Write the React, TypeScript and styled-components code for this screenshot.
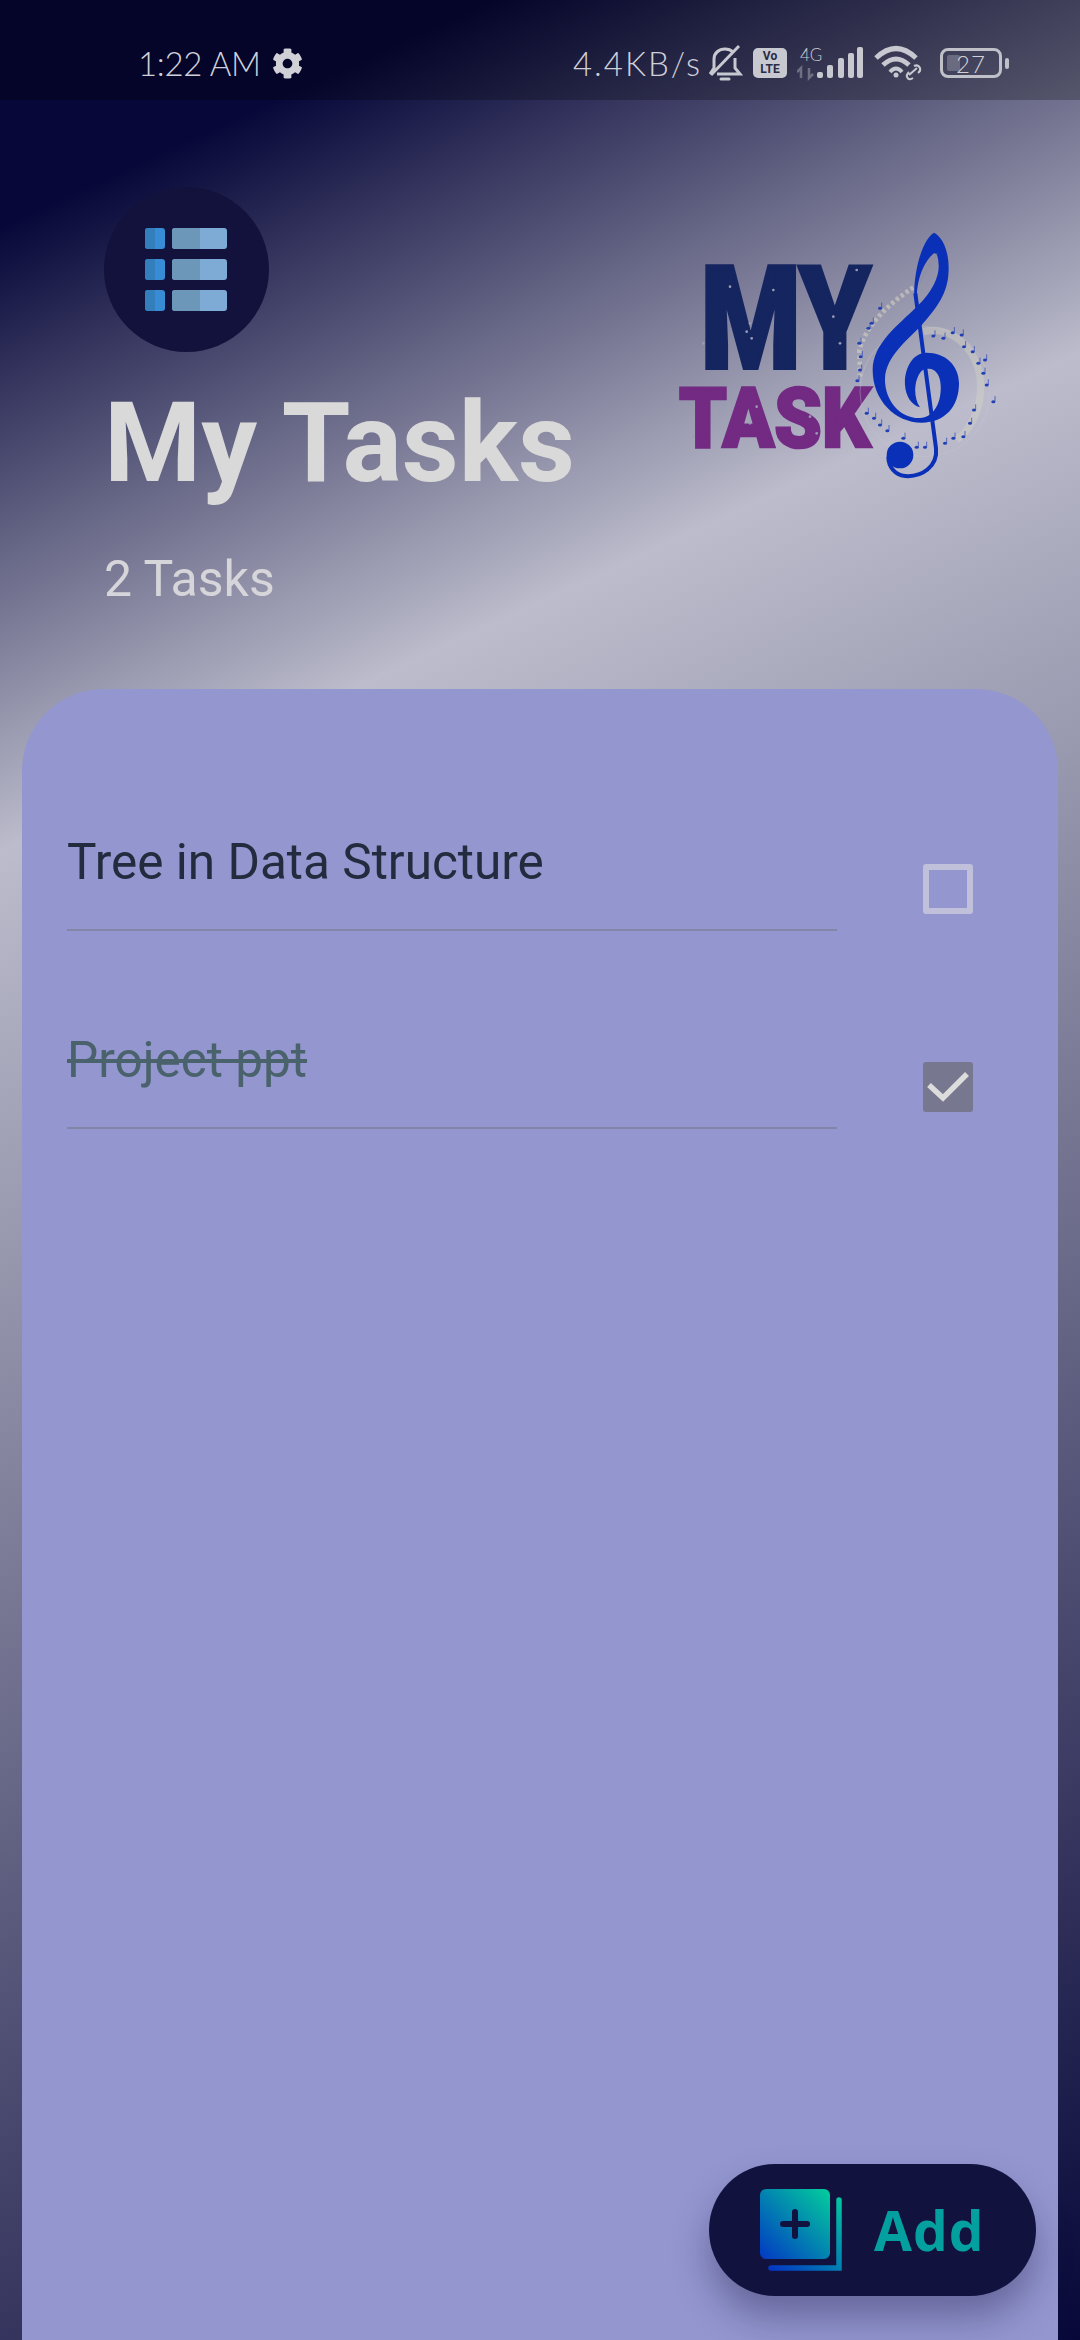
import React from 'react'
import styled, { createGlobalStyle } from 'styled-components'
import { FaCog } from 'react-icons/fa'

const GlobalStyle = createGlobalStyle`
  html, body {
    margin: 0;
    padding: 0;
    background: #070739;
  }
  * {
    box-sizing: border-box;
  }
`;

interface Task {
  title: string;
  done: boolean;
}

const tasks: Task[] = [
  { title: 'Tree in Data Structure', done: false },
  { title: 'Project ppt', done: true },
];

// little notes that circle the clef, in logo coordinates
const notes = [
  [628, 400], [632, 440], [630, 480], [622, 512], [650, 610], [672, 625], [690, 645], [712, 662],
  [850, 378], [880, 385], [908, 368], [935, 375], [942, 410], [968, 425], [985, 460], [1005, 450],
  [1000, 490], [1010, 525], [1030, 575], [972, 600], [960, 640], [940, 680], [910, 685], [885, 700],
  [800, 712], [825, 712], [760, 685], [665, 340], [690, 295], [655, 355],
];

const specks = [
  [300, 340], [290, 365], [305, 385], [240, 230], [370, 240], [550, 320], [570, 400], [160, 400],
  [210, 610], [320, 590], [300, 640], [480, 620], [500, 670], [130, 680], [620, 180],
];

const Logo = () => (
  <LogoSvg viewBox="0 0 1080 870">
    <text x="152" y="475" fontFamily="Roboto" fontWeight="900" fontSize="430" fill="#142560" stroke="#142560" strokeWidth="12" textLength="510" lengthAdjust="spacingAndGlyphs">MY</text>
    <text x="87" y="712" fontFamily="Roboto" fontWeight="900" fontSize="252" fill="#722a82" stroke="#722a82" strokeWidth="8" textLength="575" lengthAdjust="spacingAndGlyphs">TASK</text>
    {specks.map(([x, y]) => (
      <circle key={`${x}-${y}`} cx={x} cy={y} r="4" fill="#9a9ab4" />
    ))}
    <path d="M790 232 C720 280 650 340 628 420 L630 500" fill="none" stroke="#d8d5c2" strokeWidth="14" strokeDasharray="10 8" opacity="0.55" />
    <path d="M820 365 C900 345 975 410 990 500 C1000 570 975 650 920 690" fill="none" stroke="#d8d5c2" strokeWidth="22" opacity="0.4" />
    <circle cx="825" cy="545" r="195" fill="none" stroke="#c6c6d2" strokeWidth="2" opacity="0.6" />
    {notes.map(([x, y]) => (
      <g key={`${x}-${y}`} fill="#2240b4" stroke="#2240b4">
        <ellipse cx={x} cy={y} rx="6" ry="4.5" strokeWidth="0" />
        <line x1={x + 5} y1={y} x2={x + 5} y2={y - 17} strokeWidth="2" />
      </g>
    ))}
    <path d="M852 68 C885 85 900 140 895 195 C890 260 850 305 815 345 C770 392 708 440 705 505 C703 570 750 626 810 624 C850 622 875 580 872 525 C870 490 850 465 815 482 C790 510 790 565 810 592 C785 585 767 560 765 525 C762 480 785 428 830 428 C885 428 927 465 927 520 C927 590 885 638 815 638 C735 638 668 570 668 480 C668 400 745 345 800 290 C850 245 868 195 866 165 C865 140 860 128 852 130 C825 150 802 200 800 260 L793 260 C790 190 815 90 852 68 Z" fill="#0a30b8" />
    <path d="M796 250 L858 715 C864 770 815 802 765 798 C735 795 715 770 715 740" fill="none" stroke="#0a30b8" strokeWidth="12" />
    <circle cx="750" cy="735" r="40" fill="#0a30b8" />
    <path d="M862 130 C845 160 825 190 810 215" fill="none" stroke="#8a8a9c" strokeWidth="2" />
  </LogoSvg>
);

const ListIcon = () => (
  <svg width="83" height="84" viewBox="0 0 83 84">
    {[0, 31, 62].map((y) => (
      <g key={y}>
        <rect x="0" y={y} width="20" height="21" rx="3" fill="#388bd5" />
        <path d={`M3 ${y} H10 V${y + 21} H3 Q0 ${y + 21} 0 ${y + 18} V${y + 3} Q0 ${y} 3 ${y} Z`} fill="#337fbc" />
        <rect x="27" y={y} width="55" height="21" rx="3" fill="#7eabd6" />
        <path d={`M30 ${y} H55 V${y + 21} H30 Q27 ${y + 21} 27 ${y + 18} V${y + 3} Q27 ${y} 30 ${y} Z`} fill="#6c97b9" />
      </g>
    ))}
  </svg>
);

const AddIcon = () => (
  <svg width="82" height="82" viewBox="0 0 82 82">
    <defs>
      <linearGradient id="addFill" x1="0" y1="1" x2="1" y2="0">
        <stop offset="0" stopColor="#0238c4" />
        <stop offset="1" stopColor="#03cf9c" />
      </linearGradient>
      <linearGradient id="addEdge" x1="0" y1="1" x2="1" y2="0">
        <stop offset="0" stopColor="#0238c4" />
        <stop offset="1" stopColor="#03c4a0" />
      </linearGradient>
    </defs>
    <rect x="0" y="0" width="70" height="70" rx="6" fill="url(#addFill)" />
    <path d="M35 23 V47 M23 35 H47" stroke="#12123f" strokeWidth="6" strokeLinecap="round" />
    <path d="M79 11 V79 H11" fill="none" stroke="url(#addEdge)" strokeWidth="5.5" strokeLinecap="round" />
  </svg>
);

const BellOff = () => (
  <svg width="36" height="38" viewBox="0 0 36 38" fill="none" stroke="#c8c8d0" strokeWidth="3">
    <path d="M3 30 L7 24 V15 C7 9 12 5 18 5 C21 5 24 6 26 8" />
    <path d="M28 14 V24 L33 30 H10" />
    <path d="M4 31 L32 2" />
    <path d="M14 35 H22" strokeLinecap="round" />
  </svg>
);

const Signal = () => (
  <svg width="66" height="42" viewBox="0 -4 66 42">
    <text x="3" y="15" fontFamily="Lato" fontWeight="300" fontSize="17" fill="#c8c8d0">4G</text>
    <path d="M4 32 V22 L0 26 M12 22 V32 L16 28" fill="none" stroke="#6f6f82" strokeWidth="2.5" />
    {[[20, 6], [30, 13], [41, 20], [51, 25], [60, 31]].map(([x, h]) => (
      <rect key={x} x={x} y={32 - h} width="6" height={h} rx="2" fill="#c8c8d0" />
    ))}
  </svg>
);

const Wifi = () => (
  <svg width="50" height="36" viewBox="0 0 50 36" fill="none" stroke="#c8c8d0" strokeWidth="5">
    <path d="M3 13 Q23 -6 43 13" />
    <path d="M10 20 Q23 8 36 20" />
    <path d="M17 27 Q23 20 29 27" strokeWidth="4" />
    <circle cx="23" cy="30" r="2.5" fill="#c8c8d0" stroke="none" />
    <path d="M36 30 L44 23 M40 33 Q36 36 34 32 Q33 30 36 27 M41 21 Q45 19 47 23 Q48 26 45 28" strokeWidth="2" />
  </svg>
);

const Check = () => (
  <svg width="50" height="50" viewBox="0 0 50 50" fill="none">
    <path d="M6 23 L20 36 L44 12" stroke="#dcdcdc" strokeWidth="5.5" />
  </svg>
);

export default function App() {
  return (
    <>
      <GlobalStyle />
      <Screen>
        <StatusBar>
          <StatusGroup>
            <StatusText $spacing={-0.3}>1:22 AM</StatusText>
            <FaCog size={31} color="#d0d0d6" />
          </StatusGroup>
          <StatusIcons>
            <SpeedText $spacing={2}>4.4KB/s</SpeedText>
            <BellOff />
            <VolteBadge>Vo<br />LTE</VolteBadge>
            <Signal />
            <Wifi />
            <BatteryBody>
              <BatteryLevel />
              <BatteryText>27</BatteryText>
            </BatteryBody>
            <BatteryTip />
          </StatusIcons>
        </StatusBar>

        <Header>
          <HeaderText>
            <IconCircle>
              <ListIcon />
            </IconCircle>
            <Title>My Tasks</Title>
            <Subtitle>2 Tasks</Subtitle>
          </HeaderText>
          <Logo />
        </Header>

        <Card>
          {tasks.map((task) => (
            <TaskRow key={task.title}>
              <TaskLabel>
                <TaskText $done={task.done}>{task.title}</TaskText>
              </TaskLabel>
              <CheckBox $done={task.done}>{task.done && <Check />}</CheckBox>
            </TaskRow>
          ))}
        </Card>

        <AddButton>
          <AddIcon />
          <AddLabel>Add</AddLabel>
        </AddButton>
      </Screen>
    </>
  );
}

const Screen = styled.div`
  position: relative;
  display: flex;
  flex-direction: column;
  width: 1080px;
  height: 2340px;
  overflow: hidden;
  background: linear-gradient(155.2deg, #070739 0%, #070739 8%, #bcbccc 30%, #070739 100%);
  font-family: Roboto, sans-serif;
`;

const StatusBar = styled.div`
  display: flex;
  align-items: center;
  justify-content: space-between;
  flex-shrink: 0;
  height: 100px;
  padding: 26px 71px 0 138px;
  background: rgba(0, 0, 0, 0.25);
`;

const StatusGroup = styled.div`
  display: flex;
  align-items: center;
  gap: 11px;
`;

const StatusIcons = styled.div`
  display: flex;
  align-items: center;
  gap: 10px;
`;

const StatusText = styled.span<{ $spacing: number }>`
  color: #d0d0d8;
  font-family: Lato, sans-serif;
  font-size: 33px;
  font-weight: 300;
  letter-spacing: ${(p) => p.$spacing}px;
  white-space: nowrap;
`;

const SpeedText = styled(StatusText)`
  margin-right: -5px;
`;

const VolteBadge = styled.div`
  width: 34px;
  height: 30px;
  padding-top: 2px;
  border-radius: 5px;
  background: #c8c8d0;
  color: #2a2a44;
  font-family: Roboto, sans-serif;
  font-size: 12px;
  font-weight: 700;
  line-height: 13px;
  text-align: center;
`;

const BatteryBody = styled.div`
  position: relative;
  display: flex;
  align-items: center;
  justify-content: center;
  width: 62px;
  height: 30px;
  margin-left: 7px;
  border: 3px solid #c0c0c8;
  border-radius: 8px;
`;

const BatteryLevel = styled.div`
  position: absolute;
  left: 4px;
  top: 4px;
  bottom: 4px;
  width: 13px;
  border-radius: 2px;
  background: #6a6a80;
`;

const BatteryText = styled.span`
  position: relative;
  color: #d0d0d8;
  font-family: Lato, sans-serif;
  font-size: 24px;
  font-weight: 300;
  letter-spacing: 1px;
`;

const BatteryTip = styled.div`
  width: 4px;
  height: 11px;
  margin-left: -7px;
  border-radius: 2px;
  background: #c0c0c8;
`;

const Header = styled.div`
  display: flex;
  justify-content: space-between;
  flex-shrink: 0;
  height: 589px;
  padding: 87px 70px 0 104px;
`;

const HeaderText = styled.div`
  display: flex;
  flex-direction: column;
`;

const IconCircle = styled.div`
  display: flex;
  align-items: center;
  justify-content: center;
  width: 165px;
  height: 165px;
  border-radius: 50%;
  background: #12123c;
`;

const Title = styled.h1`
  margin: 26px 0 0;
  color: #d9d9d9;
  font-size: 111px;
  font-weight: 700;
  line-height: 130px;
`;

const Subtitle = styled.div`
  margin-top: 42px;
  color: #d6d6da;
  font-size: 50px;
  font-weight: 400;
  line-height: 58px;
`;

const LogoSvg = styled.svg`
  width: 360px;
  height: 290px;
  margin-top: 23px;
`;

const Card = styled.div`
  flex: 1;
  margin: 0 22px;
  padding: 44px 0 0 45px;
  border-radius: 82px 82px 0 0;
  background: #9496d0;
`;

const TaskRow = styled.div`
  display: flex;
  align-items: flex-start;
  gap: 86px;
`;

const TaskLabel = styled.div`
  display: flex;
  align-items: flex-end;
  width: 770px;
  height: 198px;
  padding-bottom: 37px;
  border-bottom: 2px solid #8486a8;
`;

const TaskText = styled.span<{ $done: boolean }>`
  color: ${(p) => (p.$done ? '#4a626b' : '#232c3e')};
  font-size: 49.5px;
  line-height: 60px;
  text-decoration: ${(p) => (p.$done ? 'line-through' : 'none')};
`;

const CheckBox = styled.div<{ $done: boolean }>`
  width: 50px;
  height: 50px;
  margin-top: 131px;
  border: ${(p) => (p.$done ? '0' : '6px solid #c0c0da')};
  border-radius: 3px;
  background: ${(p) => (p.$done ? '#77778f' : 'transparent')};
`;

const AddButton = styled.button`
  position: absolute;
  right: 44px;
  bottom: 44px;
  display: flex;
  align-items: center;
  gap: 32px;
  width: 327px;
  height: 132px;
  padding: 0 0 0 51px;
  border: 0;
  border-radius: 66px;
  background: #12123f;
  box-shadow: 0 22px 36px rgba(20, 20, 60, 0.35);
`;

const AddLabel = styled.span`
  color: #04a0a0;
  font-family: "Open Sans", sans-serif;
  font-size: 55px;
  font-weight: 700;
  letter-spacing: 1px;
  line-height: 60px;
`;
